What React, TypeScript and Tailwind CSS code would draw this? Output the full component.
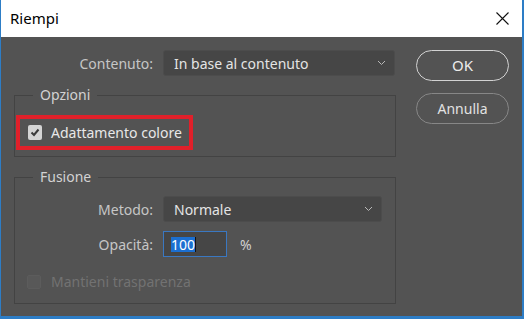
import React from "react";

const font = { fontFamily: '"Noto Sans", "Open Sans", sans-serif' };

function Chevron() {
  return (
    <svg width="9" height="6" viewBox="0 0 9 6" className="text-[#b8b8b8]">
      <path d="M1 1l3.5 3.5L8 1" fill="none" stroke="currentColor" strokeWidth="1" />
    </svg>
  );
}

function Select({ value, width }: { value: string; width: string }) {
  return (
    <div
      className={`flex h-[26px] ${width} items-center justify-between rounded-[3px] border border-[#4c4c4c] bg-[#464646] pl-[10px] pr-[8px] text-[14px] text-[#e4e4e4]`}
    >
      <span>{value}</span>
      <Chevron />
    </div>
  );
}

function Checkbox({ checked, disabled }: { checked?: boolean; disabled?: boolean }) {
  if (disabled) {
    return <div className="h-[14px] w-[14px] rounded-[2px] border border-[#5c5c5c] bg-[#585858]" />;
  }
  return (
    <div className="flex h-[15px] w-[14px] items-center justify-center rounded-[2px] bg-[#d4d4d4]">
      {checked && (
        <svg width="10" height="9" viewBox="0 0 10 9">
          <path d="M1.5 4.5l2.5 2.5L8.5 1.5" fill="none" stroke="#3a3a3a" strokeWidth="2" />
        </svg>
      )}
    </div>
  );
}

export default function App() {
  return (
    <div
      style={font}
      className="flex h-[319px] w-[524px] flex-col border-b-[3px] border-l border-r-2 border-[#2d7dc6] bg-white"
    >
      {/* Title bar */}
      <div className="flex h-[37px] shrink-0 items-center justify-between bg-white pl-[9px] pr-[13px]">
        <span className="text-[15px] text-black">Riempi</span>
        <svg width="13" height="13" viewBox="0 0 13 13">
          <path d="M0.5 0.5l12 12M12.5 0.5l-12 12" stroke="#111" strokeWidth="1.1" />
        </svg>
      </div>

      {/* Body */}
      <div className="flex flex-1 bg-[#535353] pl-[13px] pt-[13px]">
        <div className="flex w-[382px] flex-col">
          <div className="flex items-center">
            <div className="w-[149px] pr-[10px] text-right text-[14px] text-[#c6c6c6]">Contenuto:</div>
            <Select value="In base al contenuto" width="w-[232px]" />
          </div>

          <fieldset className="mt-[9px] h-[72px] border border-[#434343]">
            <legend className="ml-[18px] px-[7px] text-[14px] leading-[20px] text-[#d2d2d2]">Opzioni</legend>
            <div className="ml-px mt-[10px] flex h-[35px] w-[177px] items-center gap-[9px] border-[4px] border-[#e0202a] pl-[8px]">
              <Checkbox checked />
              <span className="text-[14px] text-[#e8e8e8]">Adattamento colore</span>
            </div>
          </fieldset>

          <fieldset className="mt-[10px] h-[137px] border border-[#434343]">
            <legend className="ml-[18px] px-[7px] text-[14px] leading-[20px] text-[#d2d2d2]">Fusione</legend>
            <div className="mt-[9px] flex items-center">
              <div className="w-[148px] pr-[10px] text-right text-[14px] text-[#c6c6c6]">Metodo:</div>
              <Select value="Normale" width="w-[219px]" />
            </div>
            <div className="mt-[9px] flex items-center">
              <div className="w-[148px] pr-[10px] text-right text-[14px] text-[#c6c6c6]">Opacità:</div>
              <div className="flex h-[26px] w-[64px] items-center border border-[#3a78c2] bg-[#464646] pl-[7px] text-[14px]">
                <span className="bg-[#1b6fd1] leading-[15px] text-white">100</span>
                <span className="h-[15px] w-px bg-[#111]" />
              </div>
              <span className="ml-[13px] text-[14px] text-[#d0d0d0]">%</span>
            </div>
            <div className="mt-[14px] flex items-center gap-[10px] pl-[12px]">
              <Checkbox disabled />
              <span className="text-[14px] text-[#727272]">Mantieni trasparenza</span>
            </div>
          </fieldset>
        </div>

        <div className="ml-[20px] flex flex-col gap-[12px]">
          <button className="h-[31px] w-[93px] rounded-full border border-[#d2d2d2] text-[15px] text-[#ececec]">
            OK
          </button>
          <button className="h-[31px] w-[93px] rounded-full border border-[#878787] text-[14px] text-[#e2e2e2]">
            Annulla
          </button>
        </div>
      </div>
    </div>
  );
}
